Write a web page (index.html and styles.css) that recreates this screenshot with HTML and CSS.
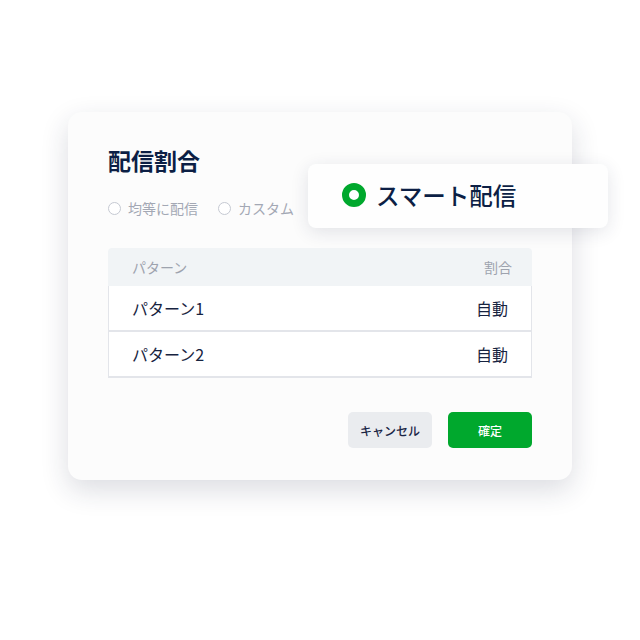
FILE: index.html
```html
<!DOCTYPE html>
<html>
<head>
    <title>配信割合</title>
    <link rel="stylesheet" href="styles.css">
</head>
<body>
    <div class="stage">
        <div class="modal">
            <h1 class="modal-title">配信割合</h1>

            <div class="radio-row">
                <label class="radio"><span class="radio-circle"></span>均等に配信</label>
                <label class="radio"><span class="radio-circle"></span>カスタム</label>
            </div>

            <div class="pattern-table">
                <div class="table-head">
                    <span>パターン</span>
                    <span>割合</span>
                </div>
                <div class="table-row">
                    <span>パターン1</span>
                    <span>自動</span>
                </div>
                <div class="table-row">
                    <span>パターン2</span>
                    <span>自動</span>
                </div>
            </div>

            <div class="modal-actions">
                <button class="btn btn-cancel">キャンセル</button>
                <button class="btn btn-ok">確定</button>
            </div>
        </div>

        <div class="smart-card">
            <span class="smart-dot"></span>
            <span class="smart-label">スマート配信</span>
        </div>
    </div>
</body>
</html>
```

FILE: styles.css
```css
* {
    margin: 0;
    padding: 0;
    box-sizing: border-box;
    font-family: "Noto Sans CJK JP", "Noto Sans", sans-serif;
}

body {
    background-color: #ffffff;
    width: 640px;
    height: 640px;
    overflow: hidden;
}

.stage {
    position: relative;
    padding: 112px 68px 0 68px;
}

.modal {
    width: 504px;
    height: 368px;
    background-color: #fcfcfc;
    border-radius: 14px;
    box-shadow: 0 10px 28px rgba(30, 40, 70, 0.16);
    padding: 32px 40px 0 40px;
}

.modal-title {
    font-size: 23px;
    font-weight: 700;
    color: #0c1f45;
    line-height: 32px;
}

.radio-row {
    display: flex;
    gap: 20px;
    margin-top: 23px;
    height: 18px;
    align-items: center;
}

.radio {
    display: flex;
    align-items: center;
    gap: 7px;
    font-size: 14px;
    color: #a3a8b4;
}

.radio-circle {
    width: 13px;
    height: 13px;
    border: 1.5px solid #c5c9d2;
    border-radius: 50%;
    background-color: #ffffff;
}

.pattern-table {
    margin-top: 31px;
    width: 424px;
}

.table-head {
    display: flex;
    justify-content: space-between;
    height: 38px;
    align-items: center;
    padding: 0 20px 0 24px;
    background-color: #f1f4f6;
    border-radius: 4px 4px 0 0;
    font-size: 14px;
    color: #9ea3ae;
}

.table-row {
    display: flex;
    justify-content: space-between;
    align-items: center;
    height: 46px;
    padding: 0 23px;
    background-color: #ffffff;
    border: 1px solid #e3e5ea;
    border-top: none;
    border-bottom-width: 2px;
    font-size: 16px;
    color: #172340;
}

.modal-actions {
    display: flex;
    justify-content: flex-end;
    gap: 16px;
    margin-top: 34px;
}

.btn {
    width: 84px;
    height: 36px;
    border: none;
    border-radius: 5px;
    font-size: 12px;
    font-weight: 500;
}

.btn-cancel {
    background-color: #eaecef;
    color: #1a2646;
}

.btn-ok {
    background-color: #00a82d;
    color: #ffffff;
}

.smart-card {
    position: absolute;
    left: 308px;
    top: 164px;
    width: 300px;
    height: 64px;
    background-color: #fefefe;
    border-radius: 8px;
    box-shadow: 0 4px 18px rgba(30, 40, 70, 0.12);
    display: flex;
    align-items: center;
    padding-left: 34px;
    padding-bottom: 2px;
    gap: 10px;
}

.smart-dot {
    width: 24px;
    height: 24px;
    border: 7px solid #00a82d;
    border-radius: 50%;
    background-color: #ffffff;
}

.smart-label {
    font-size: 23.5px;
    font-weight: 500;
    color: #0c1f45;
    line-height: 30px;
}
```
